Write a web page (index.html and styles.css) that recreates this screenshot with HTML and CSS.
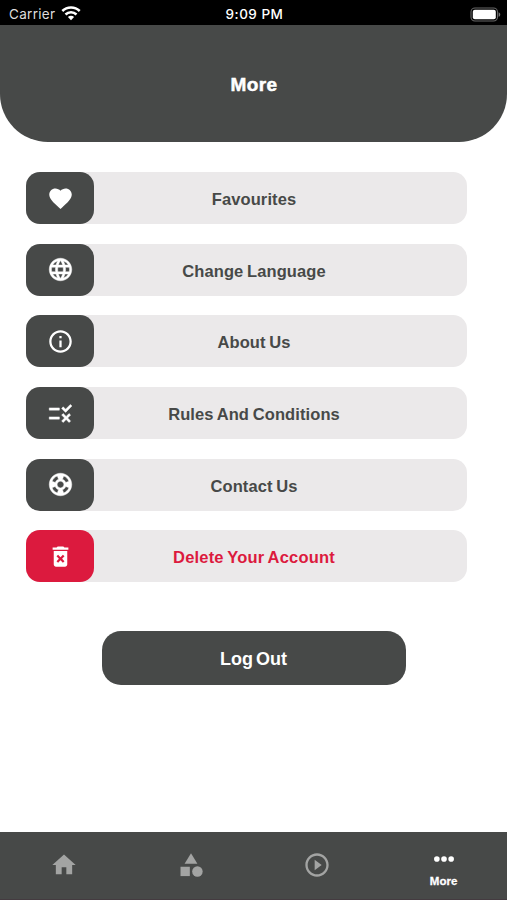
FILE: index.html
```
<!doctype html>
<html lang="en">
<head>
    <meta charset="UTF-8">
    <title>More</title>
    <link rel="stylesheet" href="styles.css">
</head>
<body>
<div class="app">
    <div class="status">
        <div class="carrier">
            <span>Carrier</span>
            <svg width="20" height="15" viewBox="0 0 20 15">
                <g fill="none" stroke="#fff" stroke-width="2.5">
                    <path d="M1.3 5a12.3 12.3 0 0 1 17.4 0"/>
                    <path d="M4.5 8.5a7.8 7.8 0 0 1 11 0"/>
                </g>
                <path fill="#fff" d="M10 14.3l-3.1-3.3a4.4 4.4 0 0 1 6.2 0z"/>
            </svg>
        </div>
        <div class="time">9:09 PM</div>
        <div class="battery">
            <svg width="31" height="15" viewBox="0 0 31 15">
                <rect x="1" y="1" width="26.5" height="13" rx="4" fill="none" stroke="#666" stroke-width="1.1"/>
                <rect x="2.8" y="2.8" width="23" height="9.4" rx="2" fill="#fff"/>
                <path fill="#777" d="M28.6 5.2c2.2.8 2.2 3.8 0 4.6z"/>
            </svg>
        </div>
    </div>

    <div class="header">
        <h1>More</h1>
    </div>

    <ul class="menu">
        <li>
            <div class="tile"><svg viewBox="0 0 24 24"><path d="M12 21.35l-1.45-1.32C5.4 15.36 2 12.28 2 8.5 2 5.42 4.42 3 7.5 3c1.74 0 3.41.81 4.5 2.09C13.09 3.81 14.76 3 16.5 3 19.58 3 22 5.42 22 8.5c0 3.78-3.4 6.86-8.55 11.54L12 21.35z"/></svg></div>
            <a>Favourites</a>
        </li>
        <li>
            <div class="tile bold"><svg viewBox="0 0 24 24"><path d="M11.99 2C6.47 2 2 6.48 2 12s4.47 10 9.99 10C17.52 22 22 17.52 22 12S17.52 2 11.99 2zm6.93 6h-2.95c-.32-1.25-.78-2.45-1.38-3.56 1.84.63 3.37 1.91 4.33 3.56zM12 4.04c.83 1.2 1.48 2.53 1.91 3.96h-3.82c.43-1.43 1.08-2.76 1.91-3.96zM4.26 14C4.1 13.36 4 12.69 4 12s.1-1.36.26-2h3.38c-.08.66-.14 1.32-.14 2s.06 1.34.14 2H4.26zm.82 2h2.95c.32 1.25.78 2.45 1.38 3.56-1.84-.63-3.37-1.9-4.33-3.56zm2.95-8H5.08c.96-1.66 2.49-2.93 4.33-3.56C8.81 5.55 8.35 6.75 8.03 8zM12 19.96c-.83-1.2-1.48-2.53-1.91-3.96h3.82c-.43 1.43-1.08 2.76-1.91 3.96zM14.34 14H9.66c-.09-.66-.16-1.32-.16-2s.07-1.35.16-2h4.68c.09.65.16 1.32.16 2s-.07 1.34-.16 2zm.25 5.56c.6-1.11 1.06-2.31 1.38-3.56h2.95c-.96 1.65-2.49 2.93-4.33 3.56zM16.36 14c.08-.66.14-1.32.14-2s-.06-1.34-.14-2h3.38c.16.64.26 1.31.26 2s-.1 1.36-.26 2h-3.38z"/></svg></div>
            <a>Change Language</a>
        </li>
        <li>
            <div class="tile"><svg viewBox="0 0 24 24"><path d="M11 7h2v2h-2zm0 4h2v6h-2zm1-9C6.48 2 2 6.48 2 12s4.48 10 10 10 10-4.48 10-10S17.52 2 12 2zm0 18c-4.41 0-8-3.59-8-8s3.59-8 8-8 8 3.59 8 8-3.59 8-8 8z"/></svg></div>
            <a>About Us</a>
        </li>
        <li>
            <div class="tile bold"><svg viewBox="0 0 24 24"><path d="M16.54 11L13 7.46l1.41-1.41 2.12 2.12 4.24-4.24 1.41 1.41L16.54 11zM11 7H2v2h9V7zm10 6.41L19.59 12 17 14.59 14.41 12 13 13.41 15.59 16 13 18.59 14.41 20 17 17.41 19.59 20 21 18.59 18.41 16 21 13.41zM11 15H2v2h9v-2z"/></svg></div>
            <a>Rules And Conditions</a>
        </li>
        <li>
            <div class="tile bold"><svg viewBox="0 0 24 24"><path d="M12 2C6.48 2 2 6.48 2 12s4.48 10 10 10 10-4.48 10-10S17.52 2 12 2zm7.46 7.12l-2.78 1.15c-.51-1.36-1.58-2.44-2.95-2.94l1.15-2.78c2.1.8 3.77 2.47 4.58 4.57zM12 15c-1.66 0-3-1.34-3-3s1.34-3 3-3 3 1.34 3 3-1.34 3-3 3zM9.13 4.54l1.17 2.78c-1.38.5-2.47 1.59-2.98 2.97L4.54 9.13c.81-2.11 2.48-3.78 4.59-4.59zM4.54 14.87l2.78-1.15c.51 1.38 1.59 2.46 2.97 2.96l-1.17 2.78c-2.1-.81-3.77-2.48-4.58-4.59zm10.34 4.59l-1.15-2.78c1.37-.51 2.45-1.59 2.95-2.97l2.78 1.17c-.81 2.1-2.48 3.77-4.58 4.58z"/></svg></div>
            <a>Contact Us</a>
        </li>
        <li class="danger">
            <div class="tile"><svg viewBox="0 0 24 24"><path d="M6 19c0 1.1.9 2 2 2h8c1.1 0 2-.9 2-2V7H6v12zm2.46-7.12l1.41-1.41L12 12.59l2.12-2.12 1.41 1.41L13.41 14l2.12 2.12-1.41 1.41L12 15.41l-2.12 2.12-1.41-1.41L10.59 14l-2.13-2.12zM15.5 4l-1-1h-5l-1 1H5v2h14V4z"/></svg></div>
            <a>Delete Your Account</a>
        </li>
    </ul>

    <button class="logout">Log Out</button>

    <div class="tabs">
        <a><svg viewBox="0 0 24 24"><path d="M10 20v-6h4v6h5v-8h3L12 3 2 12h3v8z"/></svg></a>
        <a><svg viewBox="0 0 24 24"><path d="M12 2l-5.5 9h11z"/><circle cx="17.5" cy="17.5" r="4.5"/><path d="M3 13.5h8v8H3z"/></svg></a>
        <a><svg viewBox="0 0 24 24"><path d="M10 16.5l6-4.5-6-4.5v9zM12 2C6.48 2 2 6.48 2 12s4.48 10 10 10 10-4.48 10-10S17.52 2 12 2zm0 18c-4.41 0-8-3.59-8-8s3.59-8 8-8 8 3.59 8 8-3.59 8-8 8z"/></svg></a>
        <a class="active">
            <svg viewBox="0 0 24 24"><circle cx="5.4" cy="12" r="2.6"/><circle cx="12" cy="12" r="2.6"/><circle cx="18.6" cy="12" r="2.6"/></svg>
            <span>More</span>
        </a>
    </div>
</div>
</body>
</html>
```
FILE: styles.css
```
body,ul,li,h1{margin:0; padding:0;}
ul{list-style:none;}
body{background:#fff; font-family:"Liberation Sans",Arial,sans-serif;}
.app{height:900px; display:flex; flex-direction:column; overflow:hidden;}

/* status bar */
.status{height:25px; background:#000; color:#fff; display:grid; grid-template-columns:1fr auto 1fr; align-items:center; font-family:Inter,sans-serif; font-size:13.5px; line-height:23px; padding:2px 6px 0 9px; box-sizing:border-box;}
.status svg{display:block;}
.carrier{display:flex; align-items:center; gap:6px; color:#ddd; letter-spacing:.3px; padding-top:1px;}
.carrier svg{margin-top:-3px;}
.time{font-weight:500; font-size:13.5px; letter-spacing:.5px; margin-right:1px;}
.battery{justify-self:end;}

.header{height:117px; background:#474948; border-radius:0 0 48px 48px; display:flex; align-items:center; justify-content:center;}
.header h1{color:#fff; font-size:19px; line-height:22px; font-weight:bold; letter-spacing:.4px; -webkit-text-stroke:.5px #fff; padding:2px 0 0 1px;}

/* menu rows */
.menu{margin:30px 40px 0 26px; display:flex; flex-direction:column; gap:19.7px;}
.menu li{height:52px; display:flex; align-items:center; background:#ebe9ea; border-radius:14px; color:#474948;}
.tile{width:68px; height:52px; border-radius:14px; background:#474948; display:flex; align-items:center; justify-content:center;}
.tile svg{width:27px; height:27px; fill:#fff;}
.bold svg{stroke:#fff; stroke-width:.4px;}
.menu a{flex:1; margin-right:53px; text-align:center; font-size:16.5px; line-height:20px; font-weight:bold; letter-spacing:.1px; word-spacing:-1px; padding-top:2px;}
.menu .danger{color:#dc1a3e;}
.menu .danger a{letter-spacing:.2px;}
.danger .tile{background:#dc1a3e;}

.logout{align-self:center; width:304px; height:54px; margin-top:49px; padding:2px 0 0; border:0; border-radius:19px; background:#474948; color:#fff; font:bold 18px "Liberation Sans",Arial,sans-serif; word-spacing:-2px;}

/* bottom tabs */
.tabs{height:68px; margin-top:auto; padding:0 0 2px 1px; box-sizing:border-box; display:grid; grid-template-columns:repeat(4,126.4px); justify-content:center; background:#474948; border-bottom:1px solid #443b40;}
.tabs a{display:flex; flex-direction:column; align-items:center; justify-content:center; color:#fff;}
.tabs .active{padding-top:3px;}
.tabs svg{width:28px; height:28px; fill:#a3a4a3;}
.tabs .active svg{fill:#fff; width:26px; height:26px;}
.tabs span{font-size:11.5px; line-height:12px; font-weight:bold; margin-top:3px; -webkit-text-stroke:.3px #fff;}
```
